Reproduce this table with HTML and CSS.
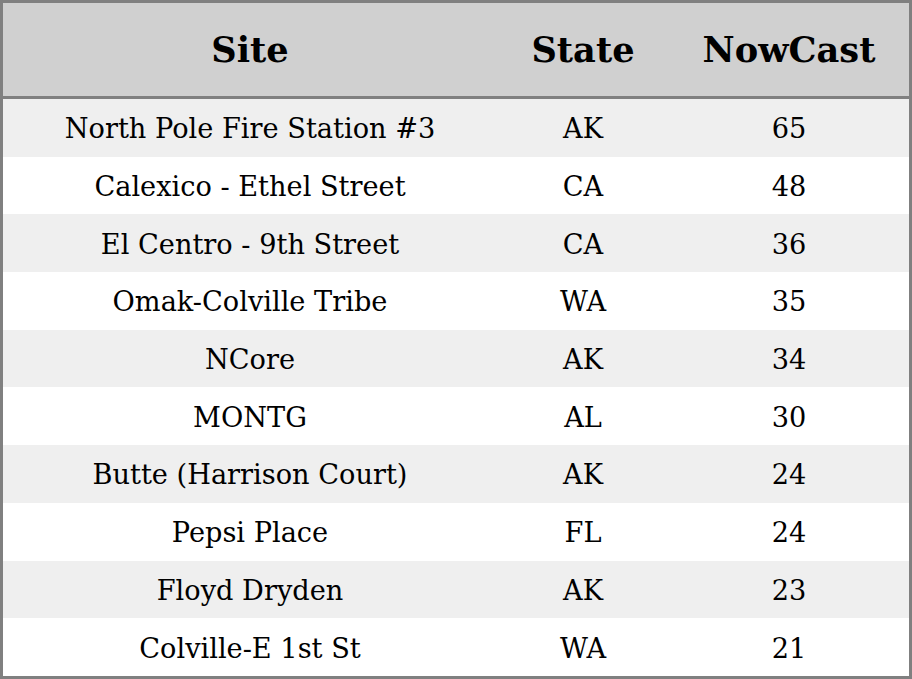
FILE: index.html
```html
<!DOCTYPE html>
<html>
<head>
<meta charset="utf-8">
<link rel="stylesheet" href="styles.css">
</head>
<body>
<table class="aq">
  <colgroup><col class="c-site"><col class="c-state"><col class="c-now"></colgroup>
  <thead>
    <tr><th>Site</th><th>State</th><th>NowCast</th></tr>
  </thead>
  <tbody>
    <tr><td>North Pole Fire Station #3</td><td>AK</td><td>65</td></tr>
    <tr><td>Calexico - Ethel Street</td><td>CA</td><td>48</td></tr>
    <tr><td>El Centro - 9th Street</td><td>CA</td><td>36</td></tr>
    <tr><td>Omak-Colville Tribe</td><td>WA</td><td>35</td></tr>
    <tr><td>NCore</td><td>AK</td><td>34</td></tr>
    <tr><td>MONTG</td><td>AL</td><td>30</td></tr>
    <tr><td>Butte (Harrison Court)</td><td>AK</td><td>24</td></tr>
    <tr><td>Pepsi Place</td><td>FL</td><td>24</td></tr>
    <tr><td>Floyd Dryden</td><td>AK</td><td>23</td></tr>
    <tr><td>Colville-E 1st St</td><td>WA</td><td>21</td></tr>
  </tbody>
</table>
</body>
</html>
```
FILE: styles.css
```css
html, body {
  margin: 0;
  padding: 0;
  background: #ffffff;
}
.aq {
  width: 912px;
  height: 679px;
  border-collapse: separate;
  border-spacing: 0;
  border: 3px solid #808080;
  box-sizing: border-box;
  table-layout: fixed;
  font-family: "DejaVu Serif", serif;
  color: #000;
}
.c-site { width: 494px; }
.c-state { width: 172px; }
.c-now { width: 240px; }
.aq th {
  height: 93px;
  padding: 0;
  background: #d0d0d0;
  border-bottom: 3px solid #808080;
  font-size: 35.2px;
  font-weight: bold;
  text-align: center;
  vertical-align: middle;
}
.aq td {
  height: 55.7px;
  padding: 2px 0 0 0;
  font-size: 27.2px;
  text-align: center;
  vertical-align: middle;
}
.aq tbody tr:nth-child(odd) td {
  background: #efefef;
}
```
